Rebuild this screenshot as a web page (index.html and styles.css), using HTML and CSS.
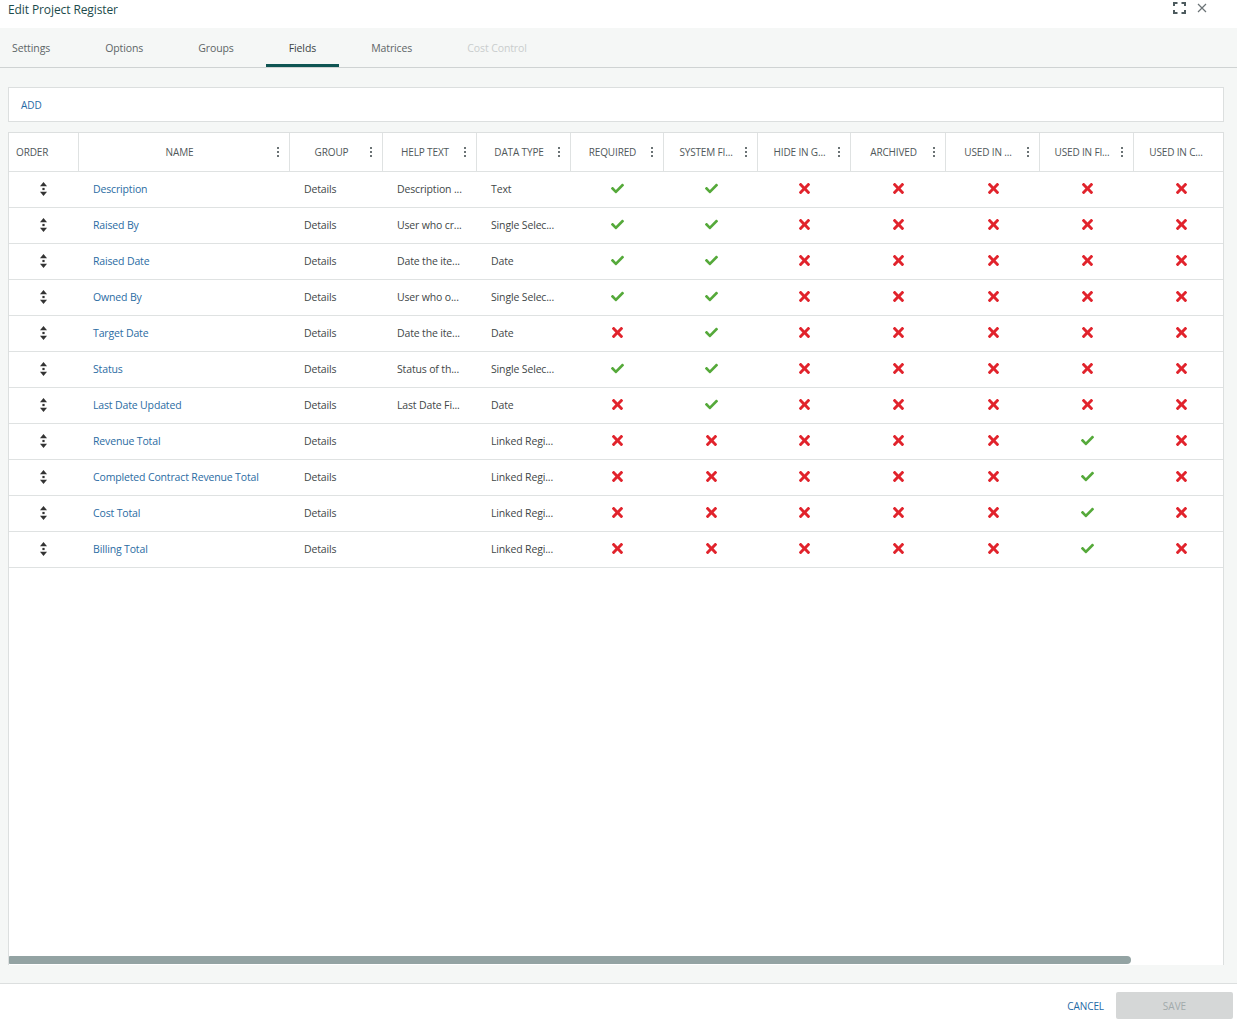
FILE: index.html
```html
<!DOCTYPE html>
<html>
<head>
<meta charset="utf-8">
<title>Edit Project Register</title>
<link rel="stylesheet" href="styles.css">
</head>
<body>
<svg class="defs" width="0" height="0">
  <symbol id="ok" viewBox="0 40 512 430"><path d="M173.898 439.404l-166.4-166.4c-9.997-9.997-9.997-26.206 0-36.204l36.203-36.204c9.997-9.998 26.207-9.998 36.204 0L192 312.69 432.095 72.596c9.997-9.997 26.207-9.997 36.204 0l36.203 36.204c9.997 9.997 9.997 26.206 0 36.204l-294.4 294.401c-9.998 9.997-26.207 9.997-36.204-.001z"/></symbol>
  <symbol id="no" viewBox="0 80 352 352"><path d="M242.72 256l100.07-100.07c12.28-12.28 12.28-32.19 0-44.480l-22.24-22.24c-12.28-12.28-32.19-12.28-44.48 0L176 189.28 75.930 89.21c-12.28-12.28-32.19-12.28-44.48 0L9.21 111.45c-12.28 12.28-12.28 32.19 0 44.48L109.28 256 9.21 356.07c-12.28 12.28-12.28 32.19 0 44.48l22.24 22.24c12.28 12.28 32.2 12.28 44.48 0L176 322.72l100.07 100.07c12.28 12.28 32.2 12.28 44.48 0l22.24-22.24c12.28-12.28 12.28-32.19 0-44.48L242.72 256z"/></symbol>
  <symbol id="ord" viewBox="0 0 7 14"><path d="M0 4.2L3.5 0 7 4.2z"/><rect x="2.4" y="5.9" width="2.2" height="2.2"/><path d="M0 9.8h7L3.5 14z"/></symbol>
  <symbol id="dots" viewBox="0 0 2 10"><rect x="0" y="0" width="2" height="2"/><rect x="0" y="4" width="2" height="2"/><rect x="0" y="8" width="2" height="2"/></symbol>
</svg>

<div class="dialog">
  <header class="titlebar">
    <span class="title">Edit Project Register</span>
    <div class="win-actions">
      <svg class="ico-expand" width="13" height="12" viewBox="0 0 13 12"><path d="M1 4V1h3.5M8.5 1H12v3M12 8v3H8.5M4.5 11H1V8" fill="none" stroke="#4d5a5e" stroke-width="2"/></svg>
      <svg class="ico-close" width="10" height="10" viewBox="0 0 10 10"><path d="M1 1l8 8M9 1L1 9" fill="none" stroke="#6b7376" stroke-width="1.2"/></svg>
    </div>
  </header>

  <nav class="tabs">
    <div class="tab first">Settings</div>
    <div class="tab">Options</div>
    <div class="tab">Groups</div>
    <div class="tab active">Fields</div>
    <div class="tab">Matrices</div>
    <div class="tab disabled">Cost Control</div>
  </nav>

  <main class="content">
    <div class="toolbar"><button class="link-btn">ADD</button></div>

    <section class="grid-panel">
      <div class="grid-scroll">
        <div class="row head">
          <div class="hc order-h">ORDER</div>
          <div class="hc"><span class="hl">NAME</span><svg class="dots"><use href="#dots"/></svg></div>
          <div class="hc"><span class="hl">GROUP</span><svg class="dots"><use href="#dots"/></svg></div>
          <div class="hc"><span class="hl">HELP TEXT</span><svg class="dots"><use href="#dots"/></svg></div>
          <div class="hc"><span class="hl">DATA TYPE</span><svg class="dots"><use href="#dots"/></svg></div>
          <div class="hc"><span class="hl">REQUIRED</span><svg class="dots"><use href="#dots"/></svg></div>
          <div class="hc"><span class="hl">SYSTEM FI...</span><svg class="dots"><use href="#dots"/></svg></div>
          <div class="hc"><span class="hl">HIDE IN G...</span><svg class="dots"><use href="#dots"/></svg></div>
          <div class="hc"><span class="hl">ARCHIVED</span><svg class="dots"><use href="#dots"/></svg></div>
          <div class="hc"><span class="hl">USED IN ...</span><svg class="dots"><use href="#dots"/></svg></div>
          <div class="hc"><span class="hl">USED IN FI...</span><svg class="dots"><use href="#dots"/></svg></div>
          <div class="hc"><span class="hl">USED IN C...</span><svg class="dots hidden"><use href="#dots"/></svg></div>
        </div>
      </div>
      <div class="spacer"></div>
      <div class="hscroll"><div class="thumb"></div></div>
    </section>
  </main>

  <footer class="footer">
    <button class="link-btn cancel">CANCEL</button>
    <button class="save" disabled>SAVE</button>
  </footer>
</div>
<script src="app.js"></script>
</body>
</html>
```

FILE: app.js
```js
(function () {
  var rows = [
    ["Description", "Details", "Description ...", "Text", [1,1,0,0,0,0,0]],
    ["Raised By", "Details", "User who cr...", "Single Selec...", [1,1,0,0,0,0,0]],
    ["Raised Date", "Details", "Date the ite...", "Date", [1,1,0,0,0,0,0]],
    ["Owned By", "Details", "User who o...", "Single Selec...", [1,1,0,0,0,0,0]],
    ["Target Date", "Details", "Date the ite...", "Date", [0,1,0,0,0,0,0]],
    ["Status", "Details", "Status of th...", "Single Selec...", [1,1,0,0,0,0,0]],
    ["Last Date Updated", "Details", "Last Date Fi...", "Date", [0,1,0,0,0,0,0]],
    ["Revenue Total", "Details", "", "Linked Regi...", [0,0,0,0,0,1,0]],
    ["Completed Contract Revenue Total", "Details", "", "Linked Regi...", [0,0,0,0,0,1,0]],
    ["Cost Total", "Details", "", "Linked Regi...", [0,0,0,0,0,1,0]],
    ["Billing Total", "Details", "", "Linked Regi...", [0,0,0,0,0,1,0]]
  ];
  var host = document.querySelector('.grid-scroll');
  rows.forEach(function (r) {
    var row = document.createElement('div');
    row.className = 'row body';
    var html = '<div class="c order"><svg class="ord"><use href="#ord"/></svg></div>' +
      '<div class="c name">' + r[0] + '</div>' +
      '<div class="c txt">' + r[1] + '</div>' +
      '<div class="c txt">' + r[2] + '</div>' +
      '<div class="c txt">' + r[3] + '</div>';
    r[4].forEach(function (v) {
      html += v
        ? '<div class="c flag"><svg class="ok"><use href="#ok"/></svg></div>'
        : '<div class="c flag"><svg class="no"><use href="#no"/></svg></div>';
    });
    row.innerHTML = html;
    host.appendChild(row);
  });
})();
```

FILE: styles.css
```css
* { box-sizing: border-box; }
html, body { margin: 0; padding: 0; }
body {
  font-family: "Open Sans", "Noto Sans", "Liberation Sans", sans-serif;
  color: #333;
  background: #fff;
  width: 1237px;
  height: 1021px;
  overflow: hidden;
}
.defs { position: absolute; width: 0; height: 0; }

.dialog {
  display: flex;
  flex-direction: column;
  height: 1021px;
}

.titlebar {
  height: 28px;
  display: flex;
  justify-content: space-between;
  align-items: flex-start;
  padding: 0 30px 0 8px;
  background: #fff;
}
.title {
  font-size: 12px;
  line-height: 18px;
  padding-top: 1px;
  letter-spacing: -0.1px;
  color: #1d4b4c;
}
.win-actions {
  display: flex;
  align-items: center;
  gap: 11px;
  padding-top: 2px;
}

.tabs {
  height: 40px;
  display: flex;
  gap: 9px;
  background: #f5f7f6;
  border-bottom: 1px solid #cfd3d3;
}
.tab {
  padding: 4px 23px 0;
  font-size: 10.5px;
  letter-spacing: -0.1px;
  color: #5d6566;
  display: flex;
  align-items: center;
  border-bottom: 3px solid transparent;
}
.tab.first { padding-left: 12px; }
.tab.active { color: #3b4445; border-bottom-color: #0f5553; }
.tab.disabled { color: #c9cdcd; }

.content {
  flex: 1;
  background: #f5f7f6;
  padding: 19px 13px 18px 8px;
  display: flex;
  flex-direction: column;
  gap: 10px;
  min-height: 0;
}
.toolbar {
  height: 35px;
  background: #fff;
  border: 1px solid #dcdfdf;
  display: flex;
  align-items: center;
  padding: 1px 0 0 12px;
}
.link-btn {
  border: 0;
  background: none;
  font-family: inherit;
  font-size: 10px;
  letter-spacing: -0.1px;
  color: #1f6aa5;
  padding: 0;
  cursor: pointer;
}

.grid-panel {
  flex: 1;
  background: #fff;
  border: 1px solid #dcdfdf;
  border-bottom: 0;
  display: flex;
  flex-direction: column;
  overflow: hidden;
  min-height: 0;
}
.grid-scroll { overflow: hidden; }
.row {
  display: grid;
  grid-template-columns: 70px 211px 93px 94px 94px 93px 94px 93px 95px 94px 94px 94px;
  width: 1225px;
  border-bottom: 1px solid #dfe2e2;
}
.row.head { height: 39px; }
.row.body { height: 36px; }

.hc {
  display: flex;
  align-items: center;
  border-right: 1px solid #dfe2e2;
  padding: 0 10px 0 3px;
  font-size: 10px;
  letter-spacing: -0.15px;
  color: #50585a;
  white-space: nowrap;
}
.hc .hl { flex: 1; text-align: center; }
.hc.order-h { padding-left: 7px; }
.dots { width: 2px; height: 10px; fill: #6b7375; flex: none; }
.dots.hidden { visibility: hidden; }

.c {
  display: flex;
  align-items: center;
  font-size: 10.5px;
  letter-spacing: -0.15px;
  white-space: nowrap;
  overflow: hidden;
  padding-bottom: 2px;
}
.c.order { justify-content: center; padding-right: 2px; }
.c.name, .c.txt { padding-left: 14px; }
.c.name { color: #2b6ca3; }
.c.txt { color: #3f4748; }
.c.flag { justify-content: center; }
.ord { width: 7px; height: 14px; fill: #333; }
.ok { width: 13px; height: 11px; fill: #55a93a; }
.no { width: 11px; height: 11px; fill: #e1232c; }

.spacer { flex: 1; }
.hscroll { height: 9px; padding-right: 92px; }
.thumb {
  height: 8px;
  background: #93a3a3;
  border-radius: 1px 5px 5px 1px;
}

.footer {
  height: 38px;
  border-top: 1px solid #dcdfdf;
  background: #fff;
  display: flex;
  justify-content: flex-end;
  align-items: flex-start;
  gap: 12px;
  padding: 8px 4px 0 0;
}
.footer .cancel { height: 27px; padding-top: 1px; }
.save {
  width: 117px;
  height: 27px;
  border: 0;
  border-radius: 2px;
  background: #d5d7d7;
  color: #a2aaab;
  font-family: inherit;
  font-size: 10px;
}
```
